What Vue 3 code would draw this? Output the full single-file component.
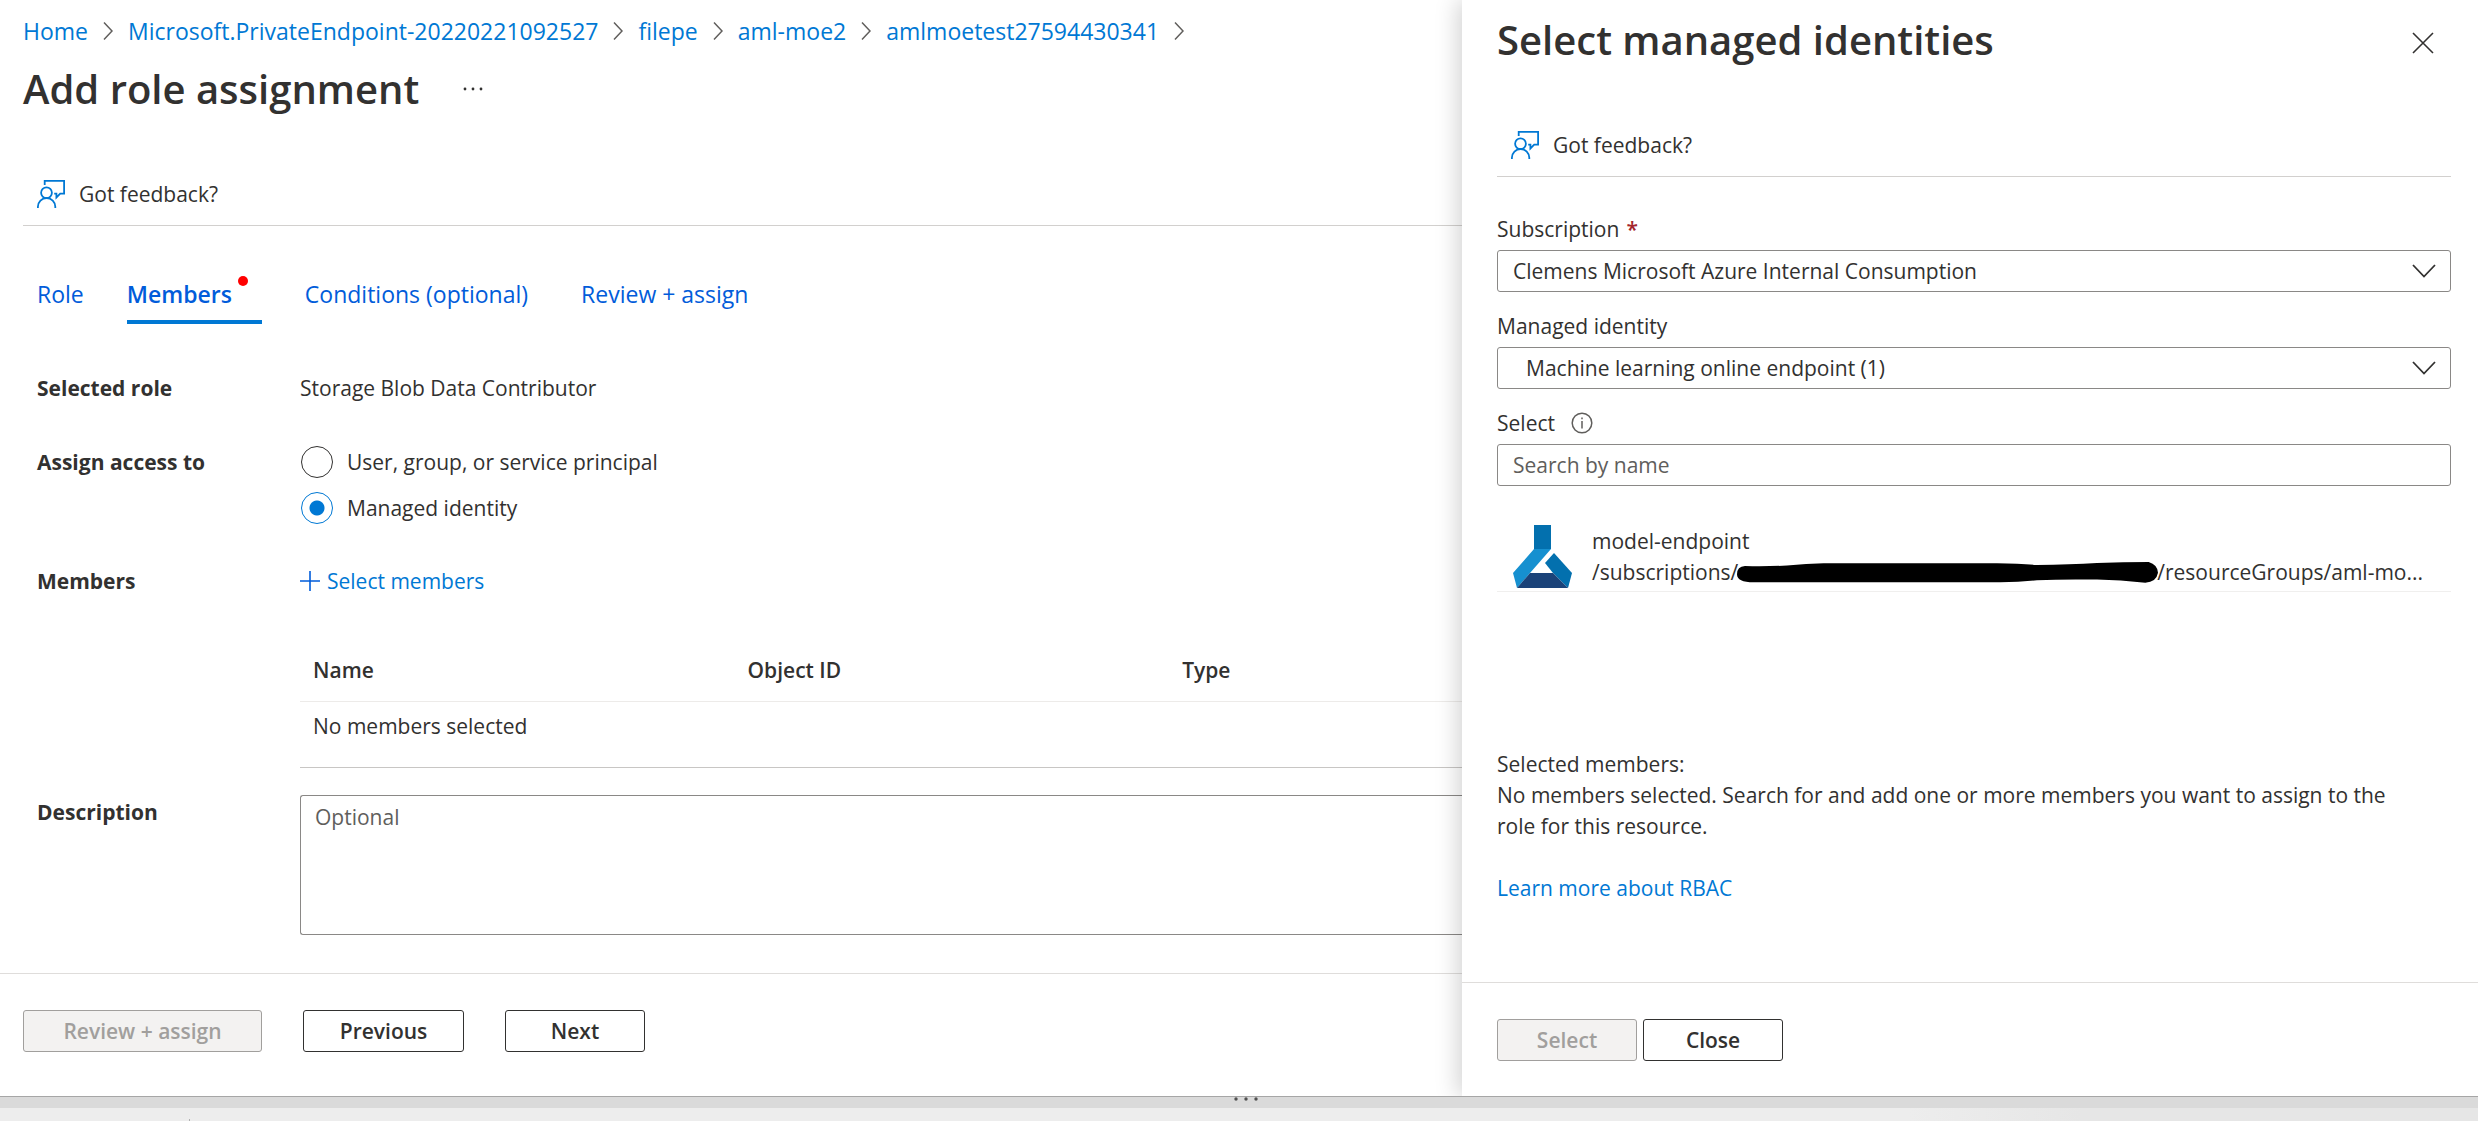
<script setup>
import { ref } from 'vue'

const crumbs = ['Home', 'Microsoft.PrivateEndpoint-20220221092527', 'filepe', 'aml-moe2', 'amlmoetest27594430341']
const tabs = [
  { label: 'Role' },
  { label: 'Members', active: true, changed: true },
  { label: 'Conditions (optional)', wide: true },
  { label: 'Review + assign' },
]
const columns = ['Name', 'Object ID', 'Type']
const access = ref('identity')
const description = ref('')
const search = ref('')
</script>

<template>
  <div class="portal">
    <div class="work">
      <main class="blade">
        <nav class="crumbs" aria-label="Breadcrumb">
          <template v-for="crumb in crumbs" :key="crumb">
            <a href="#">{{ crumb }}</a>
            <svg class="crumb-arrow" viewBox="0 0 10 18" aria-hidden="true"><path d="M1 0.5 9 9 1 17.5" /></svg>
          </template>
        </nav>

        <div class="title-row">
          <h1>Add role assignment</h1>
          <button class="more" type="button" aria-label="More actions">
            <svg viewBox="0 0 20 4"><circle cx="2" cy="2" r="1.4" /><circle cx="10" cy="2" r="1.4" /><circle cx="18" cy="2" r="1.4" /></svg>
          </button>
        </div>

        <div class="toolbar">
          <button class="feedback" type="button">
            <svg viewBox="0 0 28 28" aria-hidden="true">
              <path d="M7.7 5V.9h19.4v12.8h-3.9l-3.8 3.8v-3.8h-2.2" />
              <circle cx="9.5" cy="12.7" r="5.4" />
              <path d="M.9 28v-1.300a8.700 8.700 0 0 1 17.400 0V28" />
            </svg>
            Got feedback?
          </button>
        </div>

        <div class="tabs" role="tablist">
          <button
            v-for="tab in tabs"
            :key="tab.label"
            class="tab"
            :class="{ active: tab.active, wide: tab.wide }"
            type="button"
            role="tab"
            :aria-selected="!!tab.active"
          >
            {{ tab.label }}<span v-if="tab.changed" class="dot"></span>
          </button>
        </div>

        <form class="form" @submit.prevent>
          <div class="row role-row">
            <span class="name">Selected role</span>
            <span>Storage Blob Data Contributor</span>
          </div>

          <div class="row access-row" role="radiogroup" aria-labelledby="access-name">
            <span id="access-name" class="name">Assign access to</span>
            <div class="radios">
              <label><input v-model="access" type="radio" name="access" value="user" />User, group, or service principal</label>
              <label><input v-model="access" type="radio" name="access" value="identity" />Managed identity</label>
            </div>
          </div>

          <div class="row members-row">
            <span class="name">Members</span>
            <div>
              <a class="add" href="#">
                <svg viewBox="0 0 20 20" aria-hidden="true"><path d="M10 0v20M0 10h20" /></svg>Select members
              </a>
              <table>
                <thead>
                  <tr><th v-for="c in columns" :key="c" scope="col">{{ c }}</th></tr>
                </thead>
                <tbody>
                  <tr><td colspan="3">No members selected</td></tr>
                </tbody>
              </table>
            </div>
          </div>

          <div class="row">
            <label class="name" for="description">Description</label>
            <textarea id="description" v-model="description" placeholder="Optional"></textarea>
          </div>
        </form>

        <footer class="actions main-actions">
          <button class="btn long" type="button" disabled>Review + assign</button>
          <button class="btn medium" type="button">Previous</button>
          <button class="btn" type="button">Next</button>
        </footer>
      </main>

      <aside class="panel">
        <header class="panel-head">
          <h2>Select managed identities</h2>
          <button class="close" type="button" aria-label="Close panel">
            <svg viewBox="0 0 22 22"><path d="M1 1l20 20M21 1 1 21" /></svg>
          </button>
        </header>

        <div class="toolbar">
          <button class="feedback" type="button">
            <svg viewBox="0 0 28 28" aria-hidden="true">
              <path d="M7.7 5V.9h19.4v12.8h-3.9l-3.8 3.8v-3.8h-2.2" />
              <circle cx="9.5" cy="12.7" r="5.4" />
              <path d="M.9 28v-1.300a8.700 8.700 0 0 1 17.400 0V28" />
            </svg>
            Got feedback?
          </button>
        </div>

        <div class="fields">
          <div class="field">
            <label for="subscription">Subscription <span class="required">*</span></label>
            <div class="select">
              <select id="subscription"><option>Clemens Microsoft Azure Internal Consumption</option></select>
              <svg viewBox="0 0 24 14" aria-hidden="true"><path d="M1 1l11 11.500L23 1" /></svg>
            </div>
          </div>
          <div class="field">
            <label for="identity">Managed identity</label>
            <div class="select indented">
              <select id="identity"><option>Machine learning online endpoint (1)</option></select>
              <svg viewBox="0 0 24 14" aria-hidden="true"><path d="M1 1l11 11.500L23 1" /></svg>
            </div>
          </div>
          <div class="field">
            <label for="search">Select
              <svg class="info" viewBox="0 0 22 22" aria-hidden="true">
                <circle cx="11" cy="11" r="9.800" /><path d="M11 9v7.500M11 5.500v1.800" />
              </svg>
            </label>
            <input id="search" v-model="search" type="text" placeholder="Search by name" />
          </div>
        </div>

        <a class="result" href="#">
          <svg class="flask" viewBox="0 0 59 63" aria-hidden="true">
            <path fill="#0370ae" d="M21 0h17v24H21z" />
            <path fill="#1690d0" d="M21 24h17L17 48 4 63 0 48z" />
            <path fill="#0370ae" d="M41 28l18 20-4 15-15-15-8-10z" />
            <path fill="#1b4379" d="M17 48h23l15 15H4z" />
          </svg>
          <span class="result-text">
            <span>model-endpoint</span>
            <span class="path">
              <span>/subscriptions/</span>
              <svg class="mark" viewBox="0 0 1263 62" preserveAspectRatio="none" aria-hidden="true">
                <path d="M24 12Q90 14 150 10T260 4H780Q850 5 900 9 1000 8 1080 3 1160 0 1235 0 1262 8 1263 32 1258 60 1225 61 1150 54 1080 52 980 50 900 54 850 59 790 60H50Q0 60 0 36 0 14 24 12z" />
              </svg>
              <span>/resourceGroups/aml-mo...</span>
            </span>
          </span>
        </a>

        <section class="summary">
          <div>Selected members:</div>
          <div>No members selected. Search for and add one or more members you want to assign to the role for this resource.</div>
          <a href="#">Learn more about RBAC</a>
        </section>

        <footer class="actions">
          <button class="btn" type="button" disabled>Select</button>
          <button class="btn" type="button">Close</button>
        </footer>
      </aside>
    </div>

    <div class="splitter" role="separator">
      <svg viewBox="0 0 24 4" aria-hidden="true"><circle cx="2" cy="2" r="1.700" /><circle cx="12" cy="2" r="1.700" /><circle cx="22" cy="2" r="1.700" /></svg>
    </div>
    <div class="tray"><span class="tick"></span></div>
  </div>
</template>

<style>
body {
  margin: 0;
}
</style>

<style scoped>
.portal,
.portal * {
  box-sizing: border-box;
}
.portal {
  display: flex;
  flex-direction: column;
  min-height: 100vh;
  background: #fff;
  color: #323130;
  font: 21px/30px "Open Sans", "Noto Sans", sans-serif;
}
button,
input,
select,
textarea {
  font: inherit;
  color: inherit;
}
button {
  padding: 0;
  border: 0;
  background: none;
}
svg {
  display: block;
  flex: none;
  fill: none;
}
a {
  color: #0078d4;
  text-decoration: none;
}
.work {
  flex: 1;
  display: flex;
}
.blade {
  flex: 1;
  min-width: 0;
  display: flex;
  flex-direction: column;
  padding-top: 16px;
}
.crumbs {
  display: flex;
  align-items: center;
  gap: 15px;
  padding-left: 23px;
  font-size: 23px;
}
.crumb-arrow {
  width: 10px;
  height: 18px;
  stroke: #605e5c;
  stroke-width: 1.5;
}
.title-row {
  display: flex;
  align-items: center;
  gap: 44px;
  margin-top: 16px;
  padding-left: 23px;
}
h1,
h2 {
  margin: 0;
  font-size: 40px;
  line-height: 54px;
  font-weight: 600;
}
.more svg {
  width: 20px;
  height: 4px;
  fill: #323130;
}
.toolbar {
  display: flex;
  align-items: flex-end;
  height: 64px;
  margin-top: 46px;
  margin-left: 23px;
  padding: 0 14px 16px;
  border-bottom: 1px solid #d2d0ce;
}
.feedback {
  display: flex;
  align-items: center;
  gap: 14px;
}
.feedback svg {
  width: 28px;
  height: 28px;
  stroke: #0078d4;
  stroke-width: 1.8;
}
.tabs {
  display: flex;
  gap: 43px;
  margin-top: 49px;
  padding-left: 37px;
}
.tab {
  position: relative;
  padding-bottom: 7px;
  border-bottom: 4px solid transparent;
  color: #015cda;
  font-size: 23px;
  line-height: 38px;
}
.tab.active {
  padding-right: 30px;
  border-color: #0078d4;
  font-weight: 600;
}
.tab.wide {
  padding-right: 10px;
}
.dot {
  position: absolute;
  top: 1px;
  right: 14px;
  width: 10px;
  height: 10px;
  border-radius: 50%;
  background: #f00;
}
.form {
  padding: 49px 0 38px 37px;
}
.row {
  display: grid;
  grid-template-columns: 263px 1fr;
}
.name {
  font-weight: 700;
}
.access-row {
  margin-top: 44px;
}
.radios {
  display: flex;
  flex-direction: column;
  gap: 16px;
}
.radios label {
  display: flex;
  align-items: center;
  gap: 14px;
  height: 30px;
}
.radios input {
  appearance: none;
  flex: none;
  width: 32px;
  height: 32px;
  margin: 0 0 0 1px;
  border: 1px solid #323130;
  border-radius: 50%;
}
.radios input:checked {
  border-color: #0078d4;
  background: radial-gradient(circle, #0078d4 7px, transparent 8px);
}
.members-row {
  margin-top: 43px;
}
.add {
  display: flex;
  align-items: center;
  gap: 7px;
}
.add svg {
  width: 20px;
  height: 20px;
  stroke: #015cda;
  stroke-width: 1.6;
}
table {
  width: 100%;
  margin-top: 42px;
  table-layout: fixed;
  border-collapse: separate;
  border-spacing: 0;
  border-bottom: 1px solid #c8c6c4;
}
th {
  width: 37.4%;
  padding: 17px 13px 16px;
  border-bottom: 1px solid #edebe9;
  font-weight: 600;
  text-align: left;
}
th:last-child {
  width: auto;
}
td {
  padding: 9px 13px 26px;
}
textarea {
  display: block;
  width: 100%;
  height: 140px;
  padding: 6px 14px;
  border: 1px solid #8a8886;
  border-right: 0;
  border-radius: 3px 0 0 3px;
  resize: none;
}
.row:last-child {
  margin-top: 27px;
}
.row:last-child .name {
  padding-top: 2px;
}
::placeholder {
  color: #605e5c;
  opacity: 1;
}
.actions {
  display: flex;
  gap: 6px;
  margin-top: auto;
  padding: 36px 35px 35px;
  border-top: 1px solid #dfdddb;
}
.main-actions {
  gap: 41px;
  padding: 36px 23px 44px;
}
.btn {
  width: 140px;
  height: 42px;
  border: 1px solid #323130;
  border-radius: 3px;
  background: #fff;
  font-weight: 600;
}
.btn.medium {
  width: 161px;
}
.btn.long {
  width: 239px;
}
.btn:disabled {
  border-color: #a19f9d;
  background: #f3f2f1;
  color: #a19f9d;
}
.panel {
  position: relative;
  display: flex;
  flex-direction: column;
  width: 41%;
  padding-top: 13px;
  background: #fff;
  box-shadow: -4px 0 22px rgba(0, 0, 0, 0.18);
  clip-path: inset(0 0 0 -40px);
}
.panel-head {
  display: flex;
  align-items: center;
  justify-content: space-between;
  padding: 0 44px 0 35px;
}
.close {
  padding-top: 5px;
}
.close svg {
  width: 22px;
  height: 22px;
  stroke: #323130;
  stroke-width: 1.6;
}
.panel .toolbar {
  margin: 46px 27px 0 35px;
}
.fields {
  display: flex;
  flex-direction: column;
  gap: 19px;
  margin-top: 37px;
  padding: 0 27px 0 35px;
}
.field {
  display: flex;
  flex-direction: column;
  gap: 6px;
}
.field label {
  display: flex;
  align-items: center;
  gap: 7px;
}
.required {
  color: #a4262c;
  font-weight: 600;
}
.info {
  width: 22px;
  height: 22px;
  margin-left: 9px;
  stroke: #605e5c;
  stroke-width: 1.5;
}
.select {
  display: grid;
  align-items: center;
}
.select select,
.select svg {
  grid-area: 1 / 1;
}
.select svg {
  width: 24px;
  height: 14px;
  margin-right: 15px;
  justify-self: end;
  stroke: #323130;
  stroke-width: 1.8;
  pointer-events: none;
}
.field select,
.field input {
  appearance: none;
  width: 100%;
  height: 42px;
  padding: 0 15px;
  border: 1px solid #8a8886;
  border-radius: 3px;
  background: #fff;
}
.field .indented select {
  padding-left: 28px;
}
.result {
  display: flex;
  gap: 20px;
  margin: 39px 27px 0 35px;
  padding: 0 0 3px 16px;
  border-bottom: 1px solid #f0efee;
  color: inherit;
  line-height: 31px;
}
.flask {
  width: 59px;
  height: 63px;
}
.result-text {
  display: flex;
  flex-direction: column;
  padding-top: 1px;
}
.path {
  display: flex;
  align-items: center;
  white-space: nowrap;
}
.mark {
  width: 421px;
  height: 21px;
  margin: 0 -1px;
  fill: #000;
}
.summary {
  margin: 157px 57px 78px 35px;
  line-height: 31px;
}
.summary a {
  display: block;
  width: fit-content;
  margin-top: 31px;
}
.splitter {
  display: flex;
  justify-content: center;
  height: 12px;
  padding-left: 14px;
  border-top: 1px solid #a6a6a6;
  background: #dadada;
}
.splitter svg {
  width: 24px;
  height: 4px;
  fill: #505050;
}
.tray {
  display: flex;
  align-items: flex-end;
  height: 13px;
  padding-left: 189px;
  background: linear-gradient(90deg, #ededed 77%, #e6e6e6 84%);
}
.tick {
  width: 1px;
  height: 2px;
  background: #b0b0b0;
}
</style>
